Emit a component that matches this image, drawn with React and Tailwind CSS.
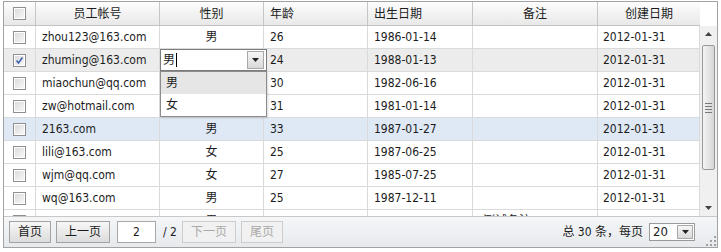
import React from 'react';

const rows = [
  { id: 1, account: 'zhou123@163.com', sex: '男', age: 26, birth: '1986-01-14', note: '', created: '2012-01-31' },
  { id: 2, account: 'zhuming@163.com', sex: '男', age: 24, birth: '1988-01-13', note: '', created: '2012-01-31', checked: true, editing: true },
  { id: 3, account: 'miaochun@qq.com', sex: '女', age: 30, birth: '1982-06-16', note: '', created: '2012-01-31' },
  { id: 4, account: 'zw@hotmail.com', sex: '男', age: 31, birth: '1981-01-14', note: '', created: '2012-01-31' },
  { id: 5, account: '2163.com', sex: '男', age: 33, birth: '1987-01-27', note: '', created: '2012-01-31', hover: true },
  { id: 6, account: 'lili@163.com', sex: '女', age: 25, birth: '1987-06-25', note: '', created: '2012-01-31' },
  { id: 7, account: 'wjm@qq.com', sex: '女', age: 27, birth: '1985-07-25', note: '', created: '2012-01-31' },
  { id: 8, account: 'wq@163.com', sex: '男', age: 25, birth: '1987-12-11', note: '', created: '2012-01-31' },
  { id: 9, account: '', sex: '男', age: '', birth: '', note: '测试备注', created: '' },
];

const COLS = 'grid grid-cols-[32px_124px_104px_104px_105px_125px_102px]';
const CELL = 'h-full flex items-center border-r border-[#dadada] overflow-hidden whitespace-nowrap';
const HCELL = 'h-full flex items-center border-r border-[#c6c6c6] overflow-hidden whitespace-nowrap';

function Check({ checked }) {
  return (
    <span className="relative block w-[13px] h-[13px] border border-[#8f8f8f] bg-gradient-to-br from-[#d8d8d8] to-[#fafafa] shadow-[inset_0_0_0_1px_#ffffff]">
      {checked && (
        <svg width="11" height="11" viewBox="0 0 11 11" className="absolute left-0 top-0">
          <path d="M2.5 5.5 L4.5 8 L8.5 2.5" fill="none" stroke="#3f63ad" strokeWidth="1.6" />
        </svg>
      )}
    </span>
  );
}

function Arrow({ up }) {
  return (
    <svg width="7" height="4" viewBox="0 0 7 4">
      <path d={up ? 'M0 4 L3.5 0 L7 4 Z' : 'M0 0 L7 0 L3.5 4 Z'} fill="#444" />
    </svg>
  );
}

function ComboButton({ className }) {
  return (
    <span className={'flex items-center justify-center border border-[#a8a8a8] bg-gradient-to-b from-[#f6f6f6] to-[#d9d9d9] ' + className}>
      <svg width="7" height="4" viewBox="0 0 7 4"><path d="M0 0 L7 0 L3.5 4 Z" fill="#222" /></svg>
    </span>
  );
}

function PageButton({ children, disabled, className }) {
  return (
    <button
      className={
        'h-[22px] flex items-center justify-center border text-[12px] ' +
        (disabled
          ? 'border-[#cdcdcd] bg-[#f1f1f1] text-[#a9a9a9]'
          : 'border-[#a3a3a3] bg-gradient-to-b from-[#f7f7f7] to-[#dcdcdc] text-[#1c1c1c]') +
        ' ' + className
      }
    >
      {children}
    </button>
  );
}

export default function App() {
  return (
    <div className="bg-white w-[721px] h-[252px] pt-[1px] pl-[3px] font-['DejaVu_Sans_Condensed','Liberation_Sans','Noto_Sans_CJK_SC',sans-serif] text-[12px] text-[#1c1c1c]">
      <div className="relative w-[715px] h-[247px] border border-[#a2a2a2] flex flex-col">
        {/* header */}
        <div className="flex h-[24px] shrink-0">
          <div className={COLS + ' h-full border-b border-[#c2c2c2] bg-gradient-to-b from-[#fdfdfd] to-[#e8e8e8]'}>
            <div className={HCELL + ' justify-center'}><Check /></div>
            <div className={HCELL + ' justify-center'}>员工帐号</div>
            <div className={HCELL + ' justify-center'}>性别</div>
            <div className={HCELL + ' pl-[6px]'}>年龄</div>
            <div className={HCELL + ' pl-[6px]'}>出生日期</div>
            <div className={HCELL + ' justify-center'}>备注</div>
            <div className={HCELL + ' justify-center border-r-0'}>创建日期</div>
          </div>
          <div className="w-[17px] bg-white" />
        </div>

        {/* body */}
        <div className="flex h-[190px] shrink-0">
          <div className="w-[696px] h-full overflow-hidden">
            {rows.map(r => (
              <div
                key={r.id}
                className={COLS + ' h-[23px] border-b border-[#dadada] ' + (r.editing ? 'bg-[#ececec]' : r.hover ? 'bg-[#dfe8f5]' : 'bg-white')}
              >
                <div className={CELL + ' justify-center'}><Check checked={r.checked} /></div>
                <div className={CELL + ' pl-[6px]'}>{r.account}</div>
                <div className={CELL + ' justify-center relative overflow-visible'}>
                  {r.editing ? (
                    <>
                      <div className="absolute left-0 top-0 z-10 w-[107px] h-[22px] border border-[#7c7c7c] bg-white flex items-center pl-[2px]">
                        <span>男</span>
                        <span className="w-[1px] h-[14px] bg-black ml-[1px]" />
                        <ComboButton className="ml-auto mr-[2px] w-[17px] h-[18px]" />
                      </div>
                      <div className="absolute left-0 top-[22px] z-10 w-[107px] h-[46px] border border-[#8c8c8c] bg-white shadow-[1px_1px_2px_rgba(0,0,0,0.15)]">
                        <div className="h-[22px] flex items-center pl-[5px] bg-[#e6e6e6]">男</div>
                        <div className="h-[22px] flex items-center pl-[5px]">女</div>
                      </div>
                    </>
                  ) : (
                    r.sex
                  )}
                </div>
                <div className={CELL + ' pl-[6px]'}>{r.age}</div>
                <div className={CELL + ' pl-[6px]'}>{r.birth}</div>
                <div className={CELL + ' pl-[10px]'}>{r.note}</div>
                <div className={CELL + ' pl-[5px]'}>{r.created}</div>
              </div>
            ))}
          </div>
          {/* scrollbar */}
          <div className="w-[17px] h-full bg-[#f0f0f0] flex flex-col items-center">
            <div className="h-[16px] flex items-center justify-center"><Arrow up /></div>
            <div className="mt-[3px] w-[13px] h-[125px] rounded-[2px] border border-[#989898] bg-gradient-to-r from-[#f4f4f4] to-[#d6d6d6] flex flex-col items-center justify-center gap-[2px]">
              <span className="w-[7px] h-[1px] bg-[#7a7a7a]" />
              <span className="w-[7px] h-[1px] bg-[#7a7a7a]" />
              <span className="w-[7px] h-[1px] bg-[#7a7a7a]" />
              <span className="w-[7px] h-[1px] bg-[#7a7a7a]" />
            </div>
            <div className="mt-auto h-[16px] flex items-center justify-center"><Arrow /></div>
          </div>
        </div>

        {/* toolbar */}
        <div className="relative z-20 flex-1 flex items-center border-t border-[#c8c8c8] bg-gradient-to-b from-[#f4f6f8] to-[#e7eaed] pl-[5px] pr-[22px]">
          <PageButton className="w-[42px]">首页</PageButton>
          <PageButton className="w-[54px] ml-[5px]">上一页</PageButton>
          <span className="ml-[7px] w-[39px] h-[22px] border border-[#a8a8a8] bg-white flex items-center justify-center">2</span>
          <span className="ml-[7px]">/ 2</span>
          <PageButton disabled className="w-[54px] ml-[5px]">下一页</PageButton>
          <PageButton disabled className="w-[42px] ml-[5px]">尾页</PageButton>
          <span className="ml-auto">总 30 条，每页</span>
          <span className="ml-[6px] w-[46px] h-[18px] border border-[#9a9a9a] bg-white flex items-center pl-[3px]">
            <span className="text-[13px]">20</span>
            <ComboButton className="ml-auto mr-[1px] w-[16px] h-[14px]" />
          </span>
          <svg width="10" height="10" viewBox="0 0 10 10" className="absolute right-[1px] bottom-[1px]">
            <g fill="#a0a0a0">
              <rect x="8" y="0" width="2" height="2" />
              <rect x="4" y="4" width="2" height="2" />
              <rect x="8" y="4" width="2" height="2" />
              <rect x="0" y="8" width="2" height="2" />
              <rect x="4" y="8" width="2" height="2" />
              <rect x="8" y="8" width="2" height="2" />
            </g>
          </svg>
        </div>
      </div>
    </div>
  );
}
